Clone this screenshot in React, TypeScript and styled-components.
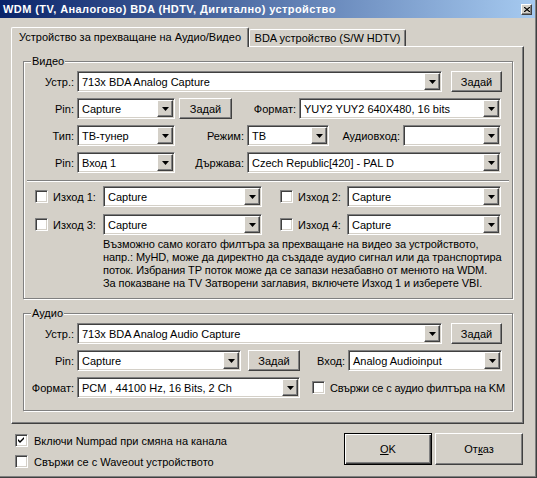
import styled, { createGlobalStyle, css } from "styled-components";

const FACE = "#d4d0c8";
const LIGHT = "#ffffff";
const SHADOW = "#808080";
const DARK = "#404040";

const GlobalStyle = createGlobalStyle`
  html, body {
    margin: 0;
    padding: 0;
    background: ${FACE};
  }
  body {
    font-family: "Liberation Sans", Arial, sans-serif;
    font-size: 11px;
    color: #000;
  }
  * {
    box-sizing: border-box;
  }
`;

const raised = css`
  background: ${FACE};
  border: 1px solid;
  border-color: ${LIGHT} ${DARK} ${DARK} ${LIGHT};
  box-shadow: inset -1px -1px ${SHADOW}, inset 1px 1px ${FACE};
`;

const sunken = css`
  border: 1px solid;
  border-color: ${SHADOW} ${LIGHT} ${LIGHT} ${SHADOW};
  box-shadow: inset 1px 1px ${DARK}, inset -1px -1px ${FACE};
`;

function DownArrow() {
  return (
    <svg width="7" height="4" viewBox="0 0 7 4">
      <polygon points="0,0 7,0 3.5,4" fill="#000" />
    </svg>
  );
}

function Combo({ w, value }: { w: number; value?: string }) {
  return (
    <ComboBox $w={w}>
      <ComboText>{value}</ComboText>
      <DropButton>
        <DownArrow />
      </DropButton>
    </ComboBox>
  );
}

function Check({ checked }: { checked?: boolean }) {
  return (
    <CheckBox>
      {checked && (
        <svg width="7" height="7" viewBox="0 0 7 7">
          <path d="M0 2 L2 4 L6 0 L6 2 L2 6 L0 4 Z" fill="#000" />
        </svg>
      )}
    </CheckBox>
  );
}

function App() {
  return (
    <>
      <GlobalStyle />
      <Window>
        <TitleBar>
          <TitleText>WDM (TV, Аналогово) BDA (HDTV, Дигитално) устройство</TitleText>
          <CloseButton>
            <svg width="6" height="5" viewBox="0 0 6 5">
              <path d="M0 0 L6 5 M6 0 L0 5" stroke="#000" strokeWidth="1.2" />
            </svg>
          </CloseButton>
        </TitleBar>

        <Body>
          <TabBar>
            <Tab $active $w={238}>Устройство за прехващане на Аудио/Видео</Tab>
            <Tab $w={157}>BDA устройство (S/W HDTV)</Tab>
          </TabBar>

          <Panel>
            <Group $h={238}>
              <Caption>Видео</Caption>
              <Rows>
                <Row>
                  <Label $w={53}>Устр.:</Label>
                  <Combo w={365} value="713x BDA Analog Capture" />
                  <PushButton $w={51} $ml={9}>Задай</PushButton>
                </Row>
                <Row>
                  <Label $w={53}>Pin:</Label>
                  <Combo w={98} value="Capture" />
                  <PushButton $w={53} $ml={4}>Задай</PushButton>
                  <Label $w={67}>Формат:</Label>
                  <Combo w={202} value="YUY2 YUY2 640X480, 16 bits" />
                </Row>
                <Row>
                  <Label $w={53}>Тип:</Label>
                  <Combo w={98} value="ТВ-тунер" />
                  <Label $w={72}>Режим:</Label>
                  <Combo w={82} value="ТВ" />
                  <Label $w={74}>Аудиовход:</Label>
                  <Combo w={98} />
                </Row>
                <Row>
                  <Label $w={53}>Pin:</Label>
                  <Combo w={98} value="Вход 1" />
                  <Label $w={72}>Държава:</Label>
                  <Combo w={254} value="Czech Republic[420] - PAL D" />
                </Row>
              </Rows>

              <Separator />

              <OutputRows>
                <Row>
                  <OutputItem>
                    <Check />
                    <OutputLabel>Изход 1:</OutputLabel>
                  </OutputItem>
                  <Combo w={159} value="Capture" />
                  <OutputItem $ml={18}>
                    <Check />
                    <OutputLabel $w={49}>Изход 2:</OutputLabel>
                  </OutputItem>
                  <Combo w={154} value="Capture" />
                </Row>
                <Row>
                  <OutputItem>
                    <Check />
                    <OutputLabel>Изход 3:</OutputLabel>
                  </OutputItem>
                  <Combo w={159} value="Capture" />
                  <OutputItem $ml={18}>
                    <Check />
                    <OutputLabel $w={49}>Изход 4:</OutputLabel>
                  </OutputItem>
                  <Combo w={154} value="Capture" />
                </Row>
              </OutputRows>

              <Note>
                Възможно само когато филтъра за прехващане на видео за устройството,
                <br />
                напр.: MyHD, може да директно да създаде аудио сигнал или да транспортира
                <br />
                поток. Избрания TP поток може да се запази незабавно от менюто на WDM.
                <br />
                За показване на TV Затворени заглавия, включете Изход 1 и изберете VBI.
              </Note>
            </Group>

            <Group $h={98} $mt={14}>
              <Caption>Аудио</Caption>
              <Rows>
                <Row>
                  <Label $w={53}>Устр.:</Label>
                  <Combo w={365} value="713x BDA Analog Audio Capture" />
                  <PushButton $w={51} $ml={9}>Задай</PushButton>
                </Row>
                <Row>
                  <Label $w={53}>Pin:</Label>
                  <Combo w={164} value="Capture" />
                  <PushButton $w={52} $ml={7}>Задай</PushButton>
                  <Label $w={48}>Вход:</Label>
                  <Combo w={154} value="Analog Audioinput" />
                </Row>
                <Row>
                  <Label $w={53}>Формат:</Label>
                  <Combo w={223} value="PCM , 44100 Hz, 16 Bits, 2 Ch" />
                  <OutputItem $ml={12}>
                    <Check />
                    <LinkText>Свържи се с аудио филтъра на KM</LinkText>
                  </OutputItem>
                </Row>
              </Rows>
            </Group>
          </Panel>

          <Footer>
            <FooterChecks>
              <CheckLine>
                <Check checked />
                <span>Включи Numpad при смяна на канала</span>
              </CheckLine>
              <CheckLine>
                <Check />
                <span>Свържи се с Waveout устройството</span>
              </CheckLine>
            </FooterChecks>
            <DialogButtons>
              <DialogButton $default>
                <u>O</u>K
              </DialogButton>
              <DialogButton>
                От<u>к</u>аз
              </DialogButton>
            </DialogButtons>
          </Footer>
        </Body>
      </Window>
    </>
  );
}

const Window = styled.div`
  width: 537px;
  height: 478px;
  background: ${FACE};
  border-right: 1px solid ${DARK};
  border-bottom: 1px solid ${DARK};
  box-shadow: inset -1px -1px ${SHADOW};
  padding-right: 1px;
  display: flex;
  flex-direction: column;
  overflow: hidden;
`;

const TitleBar = styled.div`
  height: 18px;
  flex: none;
  display: flex;
  align-items: center;
  padding-left: 3px;
  background: linear-gradient(to right, #0a246a, #a6caf0);
`;

const TitleText = styled.span`
  color: #fff;
  font-weight: 700;
  font-size: 11px;
  letter-spacing: 0.42px;
  white-space: nowrap;
`;

const CloseButton = styled.span`
  margin-left: auto;
  margin-right: 3px;
  width: 11px;
  height: 11px;
  ${raised};
  display: flex;
  align-items: center;
  justify-content: center;
`;

const Body = styled.div`
  flex: 1;
  padding: 9px 11px 0 11px;
  display: flex;
  flex-direction: column;
`;

const TabBar = styled.div`
  display: flex;
  align-items: flex-end;
  height: 19px;
  position: relative;
  z-index: 1;
`;

const Tab = styled.div<{ $active?: boolean; $w: number }>`
  width: ${(p) => p.$w}px;
  height: ${(p) => (p.$active ? 20 : 17)}px;
  margin-bottom: ${(p) => (p.$active ? -1 : 0)}px;
  background: ${FACE};
  border-top: 1px solid ${LIGHT};
  border-left: 1px solid ${LIGHT};
  border-right: 1px solid ${DARK};
  border-top-left-radius: 2px;
  border-top-right-radius: 2px;
  box-shadow: inset -1px 0 ${SHADOW};
  display: flex;
  align-items: center;
  justify-content: center;
  padding-bottom: ${(p) => (p.$active ? 2 : 0)}px;
  white-space: nowrap;
`;

const Panel = styled.div`
  width: 513px;
  height: 378px;
  flex: none;
  border-top: 1px solid ${LIGHT};
  border-left: 1px solid ${LIGHT};
  border-right: 1px solid ${DARK};
  border-bottom: 1px solid ${DARK};
  box-shadow: inset -1px -1px ${SHADOW};
  padding: 14px 0 0 11px;
`;

const Group = styled.div<{ $h: number; $mt?: number }>`
  position: relative;
  width: 490px;
  height: ${(p) => p.$h}px;
  margin-top: ${(p) => p.$mt ?? 0}px;
  border: 1px solid ${SHADOW};
  box-shadow: inset 1px 1px ${LIGHT}, 1px 1px ${LIGHT};
  padding-top: 9px;
`;

const Caption = styled.span`
  position: absolute;
  top: -7px;
  left: 7px;
  padding: 0 1px;
  background: ${FACE};
  line-height: 13px;
`;

const Rows = styled.div`
  display: flex;
  flex-direction: column;
  gap: 6px;
`;

const Row = styled.div`
  display: flex;
  align-items: center;
  height: 21px;
`;

const Label = styled.span<{ $w: number }>`
  width: ${(p) => p.$w}px;
  flex: none;
  text-align: right;
  padding-right: 3px;
  white-space: nowrap;
`;

const ComboBox = styled.div<{ $w: number }>`
  width: ${(p) => p.$w}px;
  height: 21px;
  flex: none;
  ${sunken};
  background: #fff;
  display: flex;
  align-items: center;
  padding: 1px;
`;

const ComboText = styled.span`
  flex: 1;
  padding-left: 3px;
  white-space: nowrap;
  overflow: hidden;
`;

const DropButton = styled.span`
  width: 16px;
  height: 17px;
  flex: none;
  ${raised};
  display: flex;
  align-items: center;
  justify-content: center;
`;

const PushButton = styled.div<{ $w: number; $ml?: number }>`
  width: ${(p) => p.$w}px;
  height: 21px;
  flex: none;
  margin-left: ${(p) => p.$ml ?? 0}px;
  ${raised};
  display: flex;
  align-items: center;
  justify-content: center;
`;

const Separator = styled.div`
  height: 2px;
  margin: 7px 3px 0 3px;
  border-top: 1px solid ${SHADOW};
  border-bottom: 1px solid ${LIGHT};
`;

const OutputRows = styled.div`
  display: flex;
  flex-direction: column;
  gap: 7px;
  margin-top: 4px;
`;

const OutputItem = styled.div<{ $ml?: number }>`
  display: flex;
  align-items: center;
  margin-left: ${(p) => p.$ml ?? 11}px;
  gap: 5px;
`;

const OutputLabel = styled.span<{ $w?: number }>`
  width: ${(p) => p.$w ?? 50}px;
  white-space: nowrap;
`;

const LinkText = styled.span`
  white-space: nowrap;
  letter-spacing: -0.15px;
`;

const CheckBox = styled.span`
  width: 13px;
  height: 13px;
  flex: none;
  background: #fff;
  ${sunken};
  display: flex;
  align-items: center;
  justify-content: center;
`;

const Note = styled.p`
  margin: 3px 0 0 79px;
  line-height: 13px;
  letter-spacing: -0.08px;
  white-space: nowrap;
`;

const Footer = styled.div`
  display: flex;
  padding-top: 9px;
`;

const FooterChecks = styled.div`
  display: flex;
  flex-direction: column;
  gap: 8px;
  padding-left: 4px;
  padding-top: 1px;
`;

const CheckLine = styled.label`
  display: flex;
  align-items: center;
  gap: 6px;
  height: 13px;
  white-space: nowrap;
`;

const DialogButtons = styled.div`
  margin-left: auto;
  margin-right: 1px;
  display: flex;
  gap: 3px;
`;

const DialogButton = styled.div<{ $default?: boolean }>`
  width: 88px;
  height: 32px;
  ${raised};
  display: flex;
  align-items: center;
  justify-content: center;
  ${(p) =>
    p.$default &&
    css`
      border: 1px solid #000;
      box-shadow: inset 1px 1px ${LIGHT}, inset -1px -1px ${DARK},
        inset -2px -2px ${SHADOW};
    `}
`;

export default App;
